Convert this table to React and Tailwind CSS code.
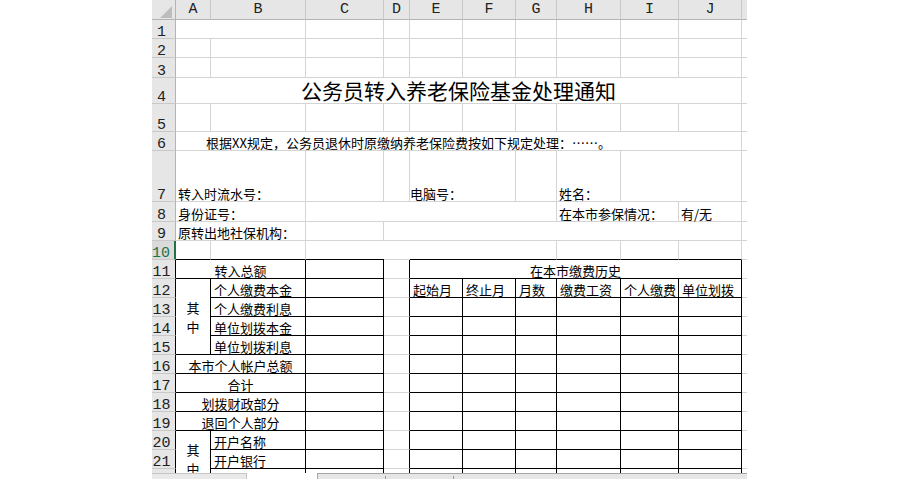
import React from 'react';

const TITLE = '公务员转入养老保险基金处理通知';
const ROW6 = '根据XX规定，公务员退休时原缴纳养老保险费按如下规定处理：……。';

const R = { g: 'border-r border-r-[#d4d4d4]', k: 'border-r border-r-black', n: '' };
const B = { g: 'border-b border-b-[#d4d4d4]', k: 'border-b border-b-black', n: '' };
const CS = { 1: '', 2: 'col-span-2', 5: 'col-span-5', 6: 'col-span-6', 7: 'col-span-7', 10: 'col-span-10' };
const RS = { 1: '', 3: 'row-span-3', 4: 'row-span-4' };
const AL = {
  l: 'items-end justify-start',
  c: 'items-end justify-center',
  v: 'flex-col items-center justify-center leading-[19px]',
  t: 'items-end justify-center pb-[2px] text-[21px] leading-none',
};

const g = (o = {}) => ({ s: 1, rs: 1, r: 'g', b: 'g', a: 'l', pl: 'pl-[2px]', ...o });
const k = (o = {}) => ({ s: 1, rs: 1, r: 'k', b: 'k', a: 'l', pl: 'pl-[3px]', ...o });
const D = () => ({ s: 1, rs: 1, r: 'k', b: 'g', a: 'l', pl: '' });
const KC = () => ({ s: 1, rs: 1, r: 'n', b: 'g', a: 'l', pl: '' });
const six = () => [k(), k(), k(), k(), k(), k()];
const plain = () => [g(), g(), g(), g(), g(), g(), g(), g(), g(), g(), KC()];

const QZ = (
  <>
    <span>其</span>
    <span>中</span>
  </>
);

const ROWS = [
  [g({ r: 'n' }), g(), g(), g(), g(), g(), g(), g(), g(), g(), KC()],
  plain(),
  plain(),
  [g({ s: 10, t: TITLE, a: 't', pl: '' }), KC()],
  plain(),
  [g({ s: 10, t: ROW6, pl: 'pl-[30px]' }), KC()],
  [
    g({ s: 2, t: '转入时流水号：' }),
    g(),
    g(),
    g({ s: 2, t: '电脑号：', pl: 'pl-0' }),
    g(),
    g({ t: '姓名：' }),
    g({ s: 2 }),
    KC(),
  ],
  [g({ s: 2, t: '身份证号：' }), g({ s: 5 }), g({ s: 2, t: '在本市参保情况：' }), g({ t: '有/无' }), KC()],
  [g({ s: 2, t: '原转出地社保机构：' }), g(), g({ s: 7 }), KC()],
  [
    g({ b: 'k' }),
    g({ b: 'k' }),
    g({ r: 'n', b: 'k' }),
    g({ r: 'n' }),
    g({ r: 'n', b: 'k' }),
    g({ r: 'n', b: 'k' }),
    g({ b: 'k' }),
    g({ b: 'k' }),
    g({ b: 'k' }),
    g({ b: 'k' }),
    KC(),
  ],
  [k({ s: 2, t: '转入总额', a: 'c', pl: '' }), k(), D(), k({ s: 6, t: '在本市缴费历史', a: 'c', pl: '' }), KC()],
  [
    k({ rs: 4, t: QZ, a: 'v', pl: '' }),
    k({ t: '个人缴费本金' }),
    k(),
    D(),
    k({ t: '起始月' }),
    k({ t: '终止月' }),
    k({ t: '月数' }),
    k({ t: '缴费工资' }),
    k({ t: '个人缴费' }),
    k({ t: '单位划拨' }),
    KC(),
  ],
  [k({ t: '个人缴费利息' }), k(), D(), ...six(), KC()],
  [k({ t: '单位划拨本金' }), k(), D(), ...six(), KC()],
  [k({ t: '单位划拨利息' }), k(), D(), ...six(), KC()],
  [k({ s: 2, t: '本市个人帐户总额', a: 'c', pl: '' }), k(), D(), ...six(), KC()],
  [k({ s: 2, t: '合计', a: 'c', pl: '' }), k(), D(), ...six(), KC()],
  [k({ s: 2, t: '划拨财政部分', a: 'c', pl: '' }), k(), D(), ...six(), KC()],
  [k({ s: 2, t: '退回个人部分', a: 'c', pl: '' }), k(), D(), ...six(), KC()],
  [k({ rs: 3, t: QZ, a: 'v', pl: '' }), k({ t: '开户名称' }), k(), D(), ...six(), KC()],
  [k({ t: '开户银行' }), k(), D(), ...six(), KC()],
  [k(), k(), D(), ...six(), KC()],
];

const LETTERS = ['A', 'B', 'C', 'D', 'E', 'F', 'G', 'H', 'I', 'J'];

function RowHead({ n }) {
  const sel = n === 10;
  let cls =
    "flex items-end justify-center pr-[4px] leading-[11px] font-['Liberation_Mono',monospace] text-[15px] border-b border-b-[#c8c8c8] ";
  if (sel) cls += 'bg-[#dadada] text-[#217346] border-r-2 border-r-[#217346]';
  else if (n >= 11) cls += 'bg-[#e6e6e6] text-[#222222] border-r border-r-black';
  else cls += 'bg-[#e6e6e6] text-[#222222] border-r border-r-[#b4b4b4]';
  return <div className={cls}>{n}</div>;
}

function Cell({ c }) {
  return (
    <div
      className={`flex min-w-0 overflow-visible whitespace-nowrap ${CS[c.s]} ${RS[c.rs]} ${R[c.r]} ${B[c.b]} ${AL[c.a]} ${c.pl}`}
    >
      {c.t}
    </div>
  );
}

export default function App() {
  return (
    <div className="w-[900px] h-[479px] bg-white overflow-hidden">
      <div className="ml-[152px] w-[595px] h-full flex flex-col">
        <div className="h-[473px] overflow-hidden">
          <div className="grid grid-cols-[24px_35px_95px_78px_26px_53px_53px_41px_64px_58px_63px_5px] grid-rows-[20px_19px_19px_20px_26px_28px_19px_51px_20px_19px_19px_repeat(12,19px)] font-['Noto_Sans_CJK_SC',sans-serif] text-[13px] leading-[15px] text-black">
            <div className="flex items-end justify-end pr-[3px] pb-[1px] bg-[#e6e6e6] border-r border-r-[#b4b4b4] border-b border-b-[#b4b4b4]">
              <svg width="12" height="12" viewBox="0 0 12 12">
                <polygon points="12,0 12,12 0,12" fill="#bdbdbd" />
              </svg>
            </div>
            {LETTERS.map((l) => (
              <div
                key={l}
                className="flex items-center justify-center bg-[#e6e6e6] border-r border-r-[#c8c8c8] border-b border-b-[#b4b4b4] font-['Liberation_Mono',monospace] text-[15px] text-[#222222]"
              >
                {l}
              </div>
            ))}
            <div className="bg-[#e6e6e6] border-b border-b-[#b4b4b4]" />
            {ROWS.map((row, i) => (
              <React.Fragment key={i}>
                <RowHead n={i + 1} />
                {row.map((c, j) => (
                  <Cell key={j} c={c} />
                ))}
              </React.Fragment>
            ))}
          </div>
        </div>
        <div className="flex h-[6px]">
          <div className="w-[95px] bg-[#e9e9e9] border-t border-r border-[#c6c6c6]" />
          <div className="w-[70px] bg-white" />
          <div className="flex-1 flex items-end bg-[#e6e6e6] border-t border-l border-[#a6a6a6]">
            <div className="w-[67px]" />
            <div className="w-px h-[3px] bg-[#9a9a9a]" />
            <div className="w-[67px]" />
            <div className="w-px h-[3px] bg-[#9a9a9a]" />
          </div>
        </div>
      </div>
    </div>
  );
}
